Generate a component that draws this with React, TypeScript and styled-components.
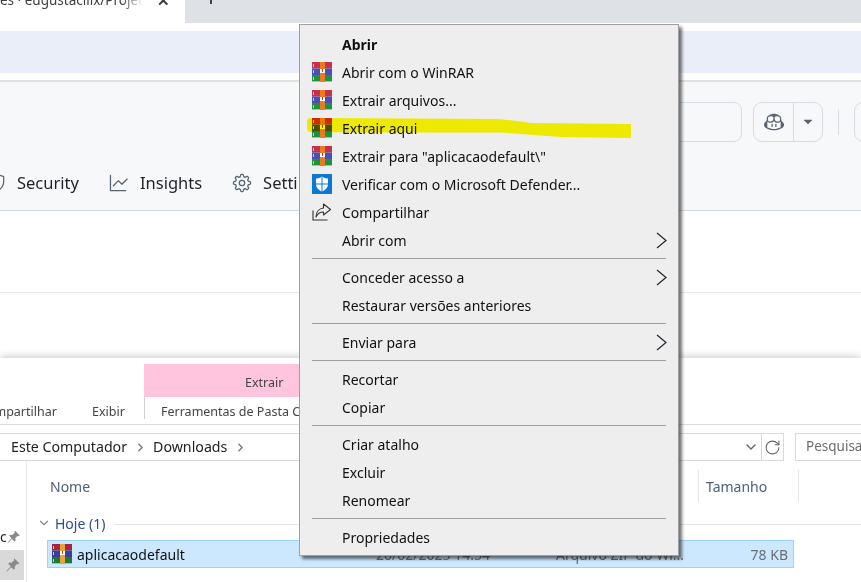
import styled, { createGlobalStyle } from "styled-components";
import { GoCopilot, GoGear, GoGraph, GoShield, GoTriangleDown } from "react-icons/go";
import { ChevronDown, ChevronRight, RotateCw } from "lucide-react";

const GlobalStyle = createGlobalStyle`
    html, body {
        margin: 0;
        padding: 0;
        background: #fff;
    }
    * {
        box-sizing: border-box;
    }
`;

const Screen = styled.div`
    position: relative;
    width: 861px;
    height: 582px;
    overflow: hidden;
    background: #fff;
    font-family: "Noto Sans", "Open Sans", sans-serif;
`;

/* browser behind everything */
const TabStrip = styled.div`
    display: flex;
    height: 23px;
    background: #dee1e6;
`;

const ActiveTab = styled.div`
    display: flex;
    align-items: flex-start;
    width: 185px;
    background: #fff;
    overflow: hidden;
`;

const TabTitle = styled.div`
    width: 143px;
    margin-top: -9px;
    font-size: 13.5px;
    line-height: 18px;
    white-space: nowrap;
    overflow: hidden;
    color: #3c4043;
    -webkit-mask-image: linear-gradient(to right, #000 85%, transparent);
    mask-image: linear-gradient(to right, #000 85%, transparent);
`;

const TabClose = styled.div`
    margin: -9px 0 0 14px;
    font-size: 15px;
    font-weight: 700;
    line-height: 18px;
    color: #3c4043;
`;

const TabRest = styled.div`
    flex: 1;
    background: #dee1e6;
    border-top-left-radius: 11px;
    border-bottom-left-radius: 11px;
    overflow: hidden;
    padding-left: 25px;
`;

const NewTabStem = styled.div`
    width: 2px;
    height: 4px;
    background: #444;
`;

const Bookmarks = styled.div`
    height: 42px;
    margin-top: 8px;
    background: #e9eef8;
`;

const RepoHeader = styled.div`
    height: 131px;
    margin-top: 7px;
    background: #f6f8fa;
    border-top: 2px solid #e0e2dd;
    border-bottom: 1px solid #d1d9e0;
`;

const Actions = styled.div`
    display: flex;
    justify-content: flex-end;
    align-items: center;
    gap: 11px;
    height: 40px;
    margin: 20px -30px 0 0;
`;

const SearchBox = styled.div`
    width: 240px;
    height: 40px;
    border: 1px solid #d5dce3;
    border-radius: 8px;
`;

const CopilotGroup = styled.div`
    display: flex;
    width: 70px;
    height: 40px;
    border: 1px solid #d5dce3;
    border-radius: 9px;
    color: #59636e;
`;

const CopilotPart = styled.div<{ $width: number; $divided?: boolean }>`
    display: flex;
    align-items: center;
    justify-content: center;
    width: ${(p) => p.$width}px;
    border-right: ${(p) => (p.$divided ? "1px solid #d5dce3" : "none")};
`;

const ActionDivider = styled.div`
    width: 1px;
    height: 25px;
    margin: 0 4px;
    background: #d5dce3;
`;

const CutButton = styled.div`
    width: 37px;
    height: 40px;
    border: 1px solid #d5dce3;
    border-radius: 9px;
`;

const RepoNav = styled.nav`
    display: flex;
    align-items: center;
    height: 26px;
    margin: 28px 0 0 -14px;
    gap: 30px;
`;

const NavItem = styled.div`
    display: flex;
    align-items: center;
    gap: 11px;
    font-size: 16.5px;
    line-height: 26px;
    color: #1f2328;
    white-space: nowrap;

    svg {
        color: #59636e;
    }
`;

const PageRule = styled.div`
    height: 82px;
    border-bottom: 1px solid #e6e8ea;
`;

/* explorer window */
const Explorer = styled.div`
    position: absolute;
    left: 0;
    top: 358px;
    width: 861px;
    height: 224px;
    padding-top: 6px;
    background: #fff;
    box-shadow: 0 -1px 8px rgba(0, 0, 0, 0.22);
    font-size: 14px;
    overflow: hidden;
`;

const ContextTab = styled.div`
    width: 240px;
    height: 33px;
    margin-left: 144px;
    padding-left: 101px;
    background: #ffc4de;
    font-size: 12.5px;
    line-height: 38px;
    color: #444;
`;

const RibbonTabs = styled.div`
    display: flex;
    height: 28px;
    padding-top: 5px;
    font-size: 12.5px;
    line-height: 17px;
    color: #444;
    border-bottom: 1px solid #dcdcdc;
`;

const RibbonTab = styled.div<{ $left: number; $width: number; $divided?: boolean }>`
    width: ${(p) => p.$width}px;
    height: 22px;
    margin-left: ${(p) => p.$left}px;
    margin-top: -5px;
    padding-top: 6px;
    padding-left: ${(p) => (p.$divided ? 16 : 0)}px;
    white-space: nowrap;
    border-left: ${(p) => (p.$divided ? "1px solid #d0d0d0" : "none")};
`;

const AddressRow = styled.div`
    display: flex;
    height: 28px;
    margin-top: 8px;
`;

const AddressBar = styled.div`
    display: flex;
    flex: none;
    align-items: center;
    width: 784px;
    padding-left: 11px;
    border: 1px solid #d9d9d9;
    border-left: none;
    font-size: 14.2px;
    line-height: 24px;
    color: #222;
`;

const Crumb = styled.span`
    white-space: nowrap;
`;

const CrumbSep = styled.span`
    display: flex;
    width: 26px;
    justify-content: center;
    color: #777;
`;

const AddressTools = styled.div`
    display: flex;
    align-items: center;
    margin-left: auto;
    height: 100%;
    color: #666;
`;

const RefreshButton = styled.div`
    display: flex;
    align-items: center;
    justify-content: center;
    width: 22px;
    height: 100%;
    margin-left: 2px;
    border-left: 1px solid #d9d9d9;
`;

const SearchField = styled.div`
    flex: 1;
    margin-left: 11px;
    padding-left: 10px;
    border: 1px solid #d9d9d9;
    border-right: none;
    font-size: 13.5px;
    line-height: 25px;
    color: #6d6d6d;
    white-space: nowrap;
    overflow: hidden;
`;

const Body = styled.div`
    display: flex;
`;

const Sidebar = styled.div`
    width: 27px;
    height: 122px;
    padding-top: 62px;
    border-right: 1px solid #eaeaea;
`;

const SideItem = styled.div<{ $selected?: boolean }>`
    display: flex;
    align-items: center;
    justify-content: space-between;
    width: 24px;
    height: ${(p) => (p.$selected ? 30 : 27)}px;
    padding-right: 4px;
    background: ${(p) => (p.$selected ? "#d9d9d9" : "transparent")};
    font-size: 14px;
    color: #222;
`;

const FilePane = styled.div`
    flex: 1;
    padding: 9px 0 0 20px;
`;

const ColumnHeaders = styled.div`
    display: flex;
    height: 32px;
    font-size: 14px;
    line-height: 33px;
    color: #4c607a;
`;

const NameColumn = styled.div`
    width: 651px;
    padding-left: 3px;
`;

const SizeColumn = styled.div`
    width: 101px;
    padding-left: 7px;
    border-left: 1px solid #e5e5e5;
    border-right: 1px solid #e5e5e5;
`;

const GroupHeader = styled.div`
    display: flex;
    align-items: center;
    height: 22px;
    margin-top: 10px;
    font-size: 14px;
    color: #2c4a9a;
    white-space: nowrap;

    svg {
        margin-left: -10px;
        color: #888;
    }
`;

const GroupLabel = styled.span`
    margin-left: 4px;
`;

const GroupLine = styled.div`
    flex: 1;
    height: 1px;
    margin: 2px 0 0 9px;
    background: #e5e5e5;
`;

const FileRow = styled.div`
    display: grid;
    grid-template-columns: 324px 180px 177px 1fr;
    align-items: center;
    width: 747px;
    height: 28px;
    margin-top: 6px;
    padding: 0 5px 0 4px;
    background: #cce8ff;
    border: 1px solid #99d1ff;
    font-size: 14px;
    color: #6d6d6d;
`;

const FileName = styled.div`
    display: flex;
    align-items: center;
    gap: 5px;
    color: #111;
`;

const FileSize = styled.div`
    text-align: right;
`;

/* context menu */
const Menu = styled.div`
    position: absolute;
    left: 299px;
    top: 24px;
    width: 380px;
    padding: 5px 0 4px;
    background: #eeeeee;
    border: 1px solid #a0a0a0;
    box-shadow: 3px 3px 3px rgba(0, 0, 0, 0.55);
`;

const MenuRow = styled.div<{ $bold?: boolean }>`
    display: flex;
    align-items: center;
    height: 28px;
    padding: 0 11px 0 12px;
    font-size: 14px;
    font-weight: ${(p) => (p.$bold ? 700 : 400)};
    color: #111;
    white-space: nowrap;
`;

const MenuIcon = styled.span`
    display: flex;
    flex: none;
    width: 20px;
    height: 20px;
    margin-right: 10px;
`;

const MenuArrow = styled.span`
    display: flex;
    margin-left: auto;
    margin-right: -1px;
`;

const MenuRule = styled.div`
    height: 1px;
    margin: 4px 12px;
    background: #a0a0a0;
`;

const Marker = styled.svg`
    position: absolute;
    left: 306px;
    top: 116px;
    mix-blend-mode: multiply;
    pointer-events: none;
`;

const WinRarIcon = ({ gold }: { gold?: boolean }) => (
    <svg width="20" height="20" viewBox="0 0 20 20">
        <rect x="0" y="0" width="20" height="6.5" fill={gold ? "#a8253f" : "#c8304f"} />
        <rect x="0" y="6.5" width="20" height="6.5" fill={gold ? "#3c3f9a" : "#4a4fb5"} />
        <rect x="0" y="13" width="20" height="6" fill={gold ? "#1c7a38" : "#1e9142"} />
        <rect x="0" y="19" width="20" height="1" fill="#b8b8b8" />
        <rect x="1" y="2" width="1" height="3" fill="#f5d742" />
        <rect x="1" y="8" width="1" height="3" fill="#f5d742" />
        <rect x="1" y="15" width="1" height="3" fill="#f5d742" />
        <rect x="8" y="0" width="5" height="20" fill={gold ? "#e8a23a" : "#ec7a1f"} />
        <rect x="8" y="7" width="5" height="4" fill="#fff" />
        <rect x="10" y="7" width="1" height="3" fill="#c04020" />
    </svg>
);

const DefenderIcon = () => (
    <svg width="20" height="20" viewBox="0 0 20 20">
        <rect width="20" height="20" fill="#0a78d4" />
        <path d="M10 2.500c2 1.400 4 2 6 2v5.500c0 3.600-2.600 6-6 7.500-3.400-1.500-6-3.900-6-7.500V4.500c2 0 4-.6 6-2z" fill="#fff" />
        <path d="M9.500 2.500h1V17.500h-1zM4 9.500h12v1H4z" fill="#0a78d4" />
    </svg>
);

const ShareIcon = () => (
    <svg width="20" height="20" viewBox="0 0 20 20" fill="none" stroke="#333" strokeWidth="1.1">
        <path d="M1 8.500V18h14.500" />
        <path d="M11.500 2l7 5.500-7 5.500V10C8 10 5.500 11.500 4 15c0-5 3-8.500 7.500-9z" strokeLinejoin="round" />
    </svg>
);

const SubArrow = () => (
    <svg width="12" height="17" viewBox="0 0 12 17" fill="none" stroke="#20242c" strokeWidth="1.2">
        <path d="M1 1l9 7.500-9 7.500" />
    </svg>
);

const Pin = () => (
    <svg width="14" height="14" viewBox="0 0 14 14" fill="#8a8a8a">
        <path d="M8.500 0.500l5 5-1.300.7-.9-.4-2.600 2.600.3 2.200-1.200 1.200-2.600-2.600L1 13.500l-.5-.5 4.300-4.700-2.600-2.600 1.200-1.200 2.200.3 2.600-2.600-.4-.9z" />
    </svg>
);

type MenuEntry =
    | { rule: true }
    | { rule?: false; label: string; icon?: "rar" | "defender" | "share"; bold?: boolean; arrow?: boolean };

const menuEntries: MenuEntry[] = [
    { label: "Abrir", bold: true },
    { label: "Abrir com o WinRAR", icon: "rar" },
    { label: "Extrair arquivos...", icon: "rar" },
    { label: "Extrair aqui", icon: "rar" },
    { label: 'Extrair para "aplicacaodefault\\"', icon: "rar" },
    { label: "Verificar com o Microsoft Defender...", icon: "defender" },
    { label: "Compartilhar", icon: "share" },
    { label: "Abrir com", arrow: true },
    { rule: true },
    { label: "Conceder acesso a", arrow: true },
    { label: "Restaurar versões anteriores" },
    { rule: true },
    { label: "Enviar para", arrow: true },
    { rule: true },
    { label: "Recortar" },
    { label: "Copiar" },
    { rule: true },
    { label: "Criar atalho" },
    { label: "Excluir" },
    { label: "Renomear" },
    { rule: true },
    { label: "Propriedades" },
];

const renderMenuIcon = (icon?: string) => {
    if (icon === "rar") return <WinRarIcon />;
    if (icon === "defender") return <DefenderIcon />;
    if (icon === "share") return <ShareIcon />;
    return null;
};

const App = () => {
    return (
        <>
            <GlobalStyle />
            <Screen>
                <TabStrip>
                    <ActiveTab>
                        <TabTitle>es · eugustacilix/Projet</TabTitle>
                        <TabClose>✕</TabClose>
                    </ActiveTab>
                    <TabRest>
                        <NewTabStem />
                    </TabRest>
                </TabStrip>
                <Bookmarks />
                <RepoHeader>
                    <Actions>
                        <SearchBox />
                        <CopilotGroup>
                            <CopilotPart $width={40} $divided>
                                <GoCopilot size={20} />
                            </CopilotPart>
                            <CopilotPart $width={28}>
                                <GoTriangleDown size={16} />
                            </CopilotPart>
                        </CopilotGroup>
                        <ActionDivider />
                        <CutButton />
                    </Actions>
                    <RepoNav>
                        <NavItem>
                            <GoShield size={20} />
                            Security
                        </NavItem>
                        <NavItem>
                            <GoGraph size={20} />
                            Insights
                        </NavItem>
                        <NavItem>
                            <GoGear size={20} />
                            Settings
                        </NavItem>
                    </RepoNav>
                </RepoHeader>
                <PageRule />

                <Explorer>
                    <ContextTab>Extrair</ContextTab>
                    <RibbonTabs>
                        <RibbonTab $left={-21} $width={113}>Compartilhar</RibbonTab>
                        <RibbonTab $left={0} $width={52}>Exibir</RibbonTab>
                        <RibbonTab $left={0} $width={200} $divided>Ferramentas de Pasta Compactada</RibbonTab>
                    </RibbonTabs>
                    <AddressRow>
                        <AddressBar>
                            <Crumb>Este Computador</Crumb>
                            <CrumbSep><ChevronRight size={13} strokeWidth={2.5} /></CrumbSep>
                            <Crumb>Downloads</Crumb>
                            <CrumbSep><ChevronRight size={13} strokeWidth={2.5} /></CrumbSep>
                            <AddressTools>
                                <ChevronDown size={16} />
                                <RefreshButton><RotateCw size={17} strokeWidth={1.5} /></RefreshButton>
                            </AddressTools>
                        </AddressBar>
                        <SearchField>Pesquisar</SearchField>
                    </AddressRow>
                    <Body>
                        <Sidebar>
                            <SideItem>c<Pin /></SideItem>
                            <SideItem $selected><span /><Pin /></SideItem>
                        </Sidebar>
                        <FilePane>
                            <ColumnHeaders>
                                <NameColumn>Nome</NameColumn>
                                <SizeColumn>Tamanho</SizeColumn>
                            </ColumnHeaders>
                            <GroupHeader>
                                <ChevronDown size={14} />
                                <GroupLabel>Hoje (1)</GroupLabel>
                                <GroupLine />
                            </GroupHeader>
                            <FileRow>
                                <FileName><WinRarIcon gold />aplicacaodefault</FileName>
                                <div>20/02/2025 14:54</div>
                                <div>Arquivo ZIP do Wi...</div>
                                <FileSize>78 KB</FileSize>
                            </FileRow>
                        </FilePane>
                    </Body>
                </Explorer>

                <Menu>
                    {menuEntries.map((entry, i) =>
                        entry.rule ? (
                            <MenuRule key={i} />
                        ) : (
                            <MenuRow key={i} $bold={entry.bold}>
                                <MenuIcon>{renderMenuIcon(entry.icon)}</MenuIcon>
                                {entry.label}
                                {entry.arrow && <MenuArrow><SubArrow /></MenuArrow>}
                            </MenuRow>
                        )
                    )}
                </Menu>
                <Marker width="326" height="24" viewBox="0 0 326 24">
                    <path
                        d="M1 5Q1 2 5 2L190 3Q205 4 225 7L325 8V22L255 21Q225 19 195 16.500L60 16.500 5 16Q1 16 1 12z"
                        fill="#fffa00"
                    />
                </Marker>
            </Screen>
        </>
    );
};

export default App;
